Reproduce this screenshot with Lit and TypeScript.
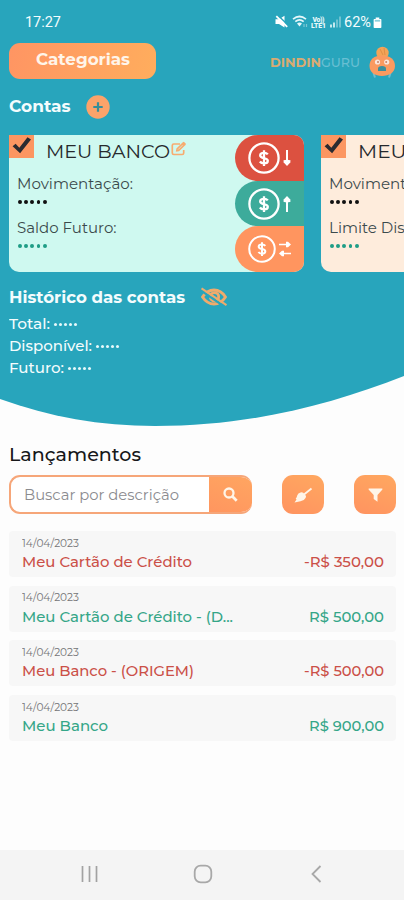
import { LitElement, html, css, svg } from "lit";
import { customElement, property } from "lit/decorators.js";
import { classMap } from "lit/directives/class-map.js";

/** Single-line label whose glyphs are stretched horizontally to a set width. */
@customElement("fit-text")
class FitText extends LitElement {
  @property() text = "";
  @property({ type: Number }) width = 0;

  static styles = css`
    :host { display: block; white-space: nowrap; flex: none; }
    .inner { display: inline-block; transform-origin: 0 50%; vertical-align: top; white-space: pre; }
  `;

  render() {
    return html`<span class="inner">${this.text}</span>`;
  }

  updated() {
    const inner = this.renderRoot.querySelector(".inner") as HTMLElement;
    inner.style.transform = "none";
    const natural = inner.getBoundingClientRect().width;
    this.style.width = `${this.width}px`;
    if (natural > 0) inner.style.transform = `scaleX(${this.width / natural})`;
  }
}

const t = (text: string, width: number) => html`<fit-text .text=${text} .width=${width}></fit-text>`;

const coin = svg`
  <circle cx="16" cy="16" r="14.6" fill="none" stroke="#fff" stroke-width="2.3"/>
  <path d="M19.8 12.4C19 11.3 17.600 10.800 16 10.800c-2.200 0-3.800 1-3.800 2.600 0 3.600 7.600 1.700 7.600 5.300 0 1.700-1.700 2.700-3.800 2.700-1.800 0-3.300-.7-4.100-1.900M16 8.200v15.800" fill="none" stroke="#fff" stroke-width="2.300"/>`;

const arrowDown = svg`<path d="M4 0v12" stroke="#fff" stroke-width="2" fill="none"/><path d="M.5 10.300Q4 9.300 7.500 10.300L7.300 12.500 4 16 .7 12.500z" fill="#fff"/>`;
const arrowUp = svg`<path d="M4 4v12" stroke="#fff" stroke-width="2" fill="none"/><path d="M.5 5.700Q4 6.700 7.500 5.700L7.300 3.500 4 0 .7 3.500z" fill="#fff"/>`;

@customElement("account-card")
class AccountCard extends LitElement {
  @property() name = "";
  @property({ type: Number }) nameWidth = 0;
  @property() second = "";
  @property({ type: Number }) secondWidth = 0;
  @property({ type: Boolean }) actions = false;

  static styles = css`
    :host { display: flex; flex: none; width: 295px; height: 137px; border-radius: 0 10px 10px 10px; overflow: hidden; color: #3b4a4c; }
    svg { display: block; flex: none; }
    .info { flex: 1; min-width: 0; }
    .top { display: flex; height: 32px; }
    .check { width: 25px; height: 23px; background: #fc9661; }
    .name { margin: 6.500px 0 0 12px; font-size: 19px; line-height: 20px; color: #26292c; }
    .edit { margin: 6px 0 0 1px; }
    .rows { padding: 5.500px 0 0 8px; font-size: 14.800px; line-height: 22px; }
    .dots { display: flex; gap: 2.300px; height: 15px; margin-bottom: 7px; padding-left: 1px; align-items: center; }
    .dots i { width: 3.900px; height: 3.900px; border-radius: 50%; background: #111; }
    .dots.green i { background: #1f9d86; }
    .actions { width: 69px; display: flex; flex-direction: column; }
    .act { flex: 1; display: flex; align-items: center; border-radius: 23px 0 0 23px; padding-left: 13px; gap: 3px; }
    .red { background: #dc5140; }
    .teal { background: #3dab9b; }
    .orange { background: #ff955f; }
  `;

  private dots(green = false) {
    return html`<div class=${classMap({ dots: true, green })}>${[0, 1, 2, 3, 4].map(() => html`<i></i>`)}</div>`;
  }

  render() {
    return html`
      <div class="info">
        <div class="top">
          <div class="check">
            <svg width="25" height="23" viewBox="0 0 25 23"><path d="M3.600 11.300l3-2.500 3.700 4L18.500 2.200l3.500 2.200L11.100 18.200z" fill="#2b2b30"/></svg>
          </div>
          <div class="name">${t(this.name, this.nameWidth)}</div>
          ${this.actions ? html`<svg class="edit" width="16" height="16" viewBox="0 0 16 16">
            <path d="M9 3H2.800Q1.300 3 1.300 4.500V12q0 1.500 1.500 1.500h8.400q1.500 0 1.500-1.500V9" fill="none" stroke="#f7ac70" stroke-width="1.700"/>
            <path d="M4.800 10.800l.6-3.300 6.400-6.300q.8-.8 1.600 0l1.100 1.100q.8.8 0 1.600L8 10.200z" fill="#f7ac70"/><path d="M7.200 8.500l4.300-4.300" stroke="#cff9f0" stroke-width=".7"/></svg>` : ""}
        </div>
        <div class="rows">
          ${t("Movimentação:", 116)}
          ${this.dots()}
          ${t(this.second, this.secondWidth)}
          ${this.dots(true)}
        </div>
      </div>
      ${this.actions ? html`<div class="actions">
        <div class="act red"><svg width="32" height="32" viewBox="0 0 32 32">${coin}</svg><svg width="8" height="16" viewBox="0 0 8 16">${arrowDown}</svg></div>
        <div class="act teal"><svg width="32" height="32" viewBox="0 0 32 32">${coin}</svg><svg width="8" height="16" viewBox="0 0 8 16">${arrowUp}</svg></div>
        <div class="act orange"><svg width="28" height="28" viewBox="0 0 32 32">${coin}</svg>
          <svg width="12" height="16" viewBox="0 0 12 16"><path d="M0 3.500h8M4 12.500h8" stroke="#fff" stroke-width="1.700"/><path d="M7 .8h2L12 3.500 9 6.200H7zM5 9.800H3L0 12.500l3 2.700h2z" fill="#fff"/></svg></div>
      </div>` : ""}`;
  }
}

interface Entry { title: string; titleWidth: number; amount: string; amountWidth: number; out: boolean; }

const ENTRIES: Entry[] = [
  { title: "Meu Cartão de Crédito", titleWidth: 170, amount: "-R$ 350,00", amountWidth: 80, out: true },
  { title: "Meu Cartão de Crédito - (D...", titleWidth: 211, amount: "R$ 500,00", amountWidth: 75, out: false },
  { title: "Meu Banco - (ORIGEM)", titleWidth: 172, amount: "-R$ 500,00", amountWidth: 80, out: true },
  { title: "Meu Banco", titleWidth: 86, amount: "R$ 900,00", amountWidth: 75, out: false },
];

@customElement("app-root")
class AppRoot extends LitElement {
  static styles = css`
    :host { display: flex; flex-direction: column; width: 404px; height: 900px; overflow: hidden; background: #fdfdfd; font-family: Montserrat, Inter, "Open Sans", sans-serif; }
    * { box-sizing: border-box; }
    svg { display: block; flex: none; }
    .hero { height: 427px; flex: none; background: #28a5bc; color: #f4fcfd; clip-path: path("M0 0H404V376C330 405 250 426 155 426C100 426 50 417 0 399Z"); }
    .status { height: 43px; display: flex; align-items: center; justify-content: space-between; padding: 0 22px 0 25px; font-family: Roboto, sans-serif; font-size: 15px; }
    .sys { display: flex; align-items: center; }
    .sys svg { margin-right: 3.500px; }
    .sys .batt { margin: 2px 0 0 2px; }
    .bar { height: 36px; display: flex; align-items: center; justify-content: space-between; padding: 0 7px 0 9px; }
    .cat { width: 147px; height: 36px; border-radius: 11px; background: linear-gradient(100deg, #ff9563, #ffad5d); display: flex; justify-content: center; padding-top: 5px; font-weight: 700; font-size: 17px; line-height: 22px; color: #fff5ea; }
    .brand { display: flex; align-items: center; font-size: 13.200px; line-height: 18px; padding-top: 1px; }
    .din { color: #d9ab72; font-weight: 700; }
    .guru { color: #69bfd3; font-weight: 500; }
    .brand svg { margin-left: 7px; }
    .accounts { height: 56px; display: flex; align-items: center; padding-left: 8.500px; gap: 16px; font-weight: 700; font-size: 17px; line-height: 22px; padding-bottom: 3px; }
    .plus { margin-top: 3px; }
    .cards { display: flex; gap: 17px; padding-left: 9px; height: 137px; overflow: hidden; }
    .mint { background: #cff9f0; }
    .cream { background: #feecdc; }
    .hist { display: flex; align-items: center; gap: 15px; height: 24px; margin-top: 13px; padding-left: 8.500px; font-weight: 700; font-size: 16.800px; line-height: 22px; }
    .sum { display: flex; align-items: center; gap: 4px; height: 22px; padding-left: 8.500px; font-weight: 500; font-size: 14.800px; line-height: 22px; }
    .sums { padding-top: 4px; }
    .dots { display: flex; gap: 2px; }
    .dots i { width: 3px; height: 3px; border-radius: 50%; background: #e6f8fa; }
    .list { flex: 1; padding: 16px 8px 0 9px; }
    .title { font-size: 19px; line-height: 24px; color: #17181a; font-weight: 500; }
    .tools { display: flex; align-items: center; margin-top: 8px; height: 39px; }
    .search { display: flex; width: 243px; height: 39px; border-radius: 11px; border: 2px solid #f6a679; border-right-width: 0; overflow: hidden; background: #fff; color: #8b8b8f; font-size: 15.200px; line-height: 36px; justify-content: space-between; padding-left: 13px; }
    .go { width: 43px; height: 39px; margin-top: -2px; background: linear-gradient(20deg, #ff955f, #ffa661); display: flex; align-items: center; justify-content: center; }
    .btn { width: 42px; height: 39px; border-radius: 11px; background: linear-gradient(20deg, #ff9360, #ffa860); display: flex; align-items: center; justify-content: center; }
    .brush { margin-left: 30px; }
    .filter { margin-left: 30px; }
    .rows { display: flex; flex-direction: column; gap: 8.700px; margin-top: 17px; }
    .row { height: 46px; background: #f7f7f7; border-radius: 4px; padding: 4.500px 12px 0 12.500px; }
    .date { font-size: 10.800px; line-height: 15px; color: #747476; }
    .line { display: flex; justify-content: space-between; font-size: 15px; line-height: 22px; font-weight: 500; color: #35a688; margin-top: .5px; }
    .out { color: #cb5048; }
    .nav { flex: none; height: 50px; background: #f4f4f4; display: flex; align-items: center; justify-content: center; gap: 91px; padding: 0 0 2px 2px; }
    .nav svg { width: 22px; height: 22px; }
  `;

  private sum(label: string, width: number) {
    return html`<div class="sum">${t(label, width)}<div class="dots">${[0, 1, 2, 3, 4].map(() => html`<i></i>`)}</div></div>`;
  }

  render() {
    return html`
      <div class="hero">
        <div class="status">
          ${t("17:27", 36)}
          <div class="sys">
            <svg width="13" height="13" viewBox="0 0 13 13"><path d="M.5 4.300h3.500L9.500 .8v11.700L4 9H.5z" fill="#fff"/><path d="M2.500 0L13 10" stroke="#28a5bc" stroke-width="1.500"/><path d="M1.300 1.200L12.200 11.800" stroke="#fff" stroke-width="1.800"/></svg>
            <svg width="16" height="13" viewBox="0 0 16 13"><path d="M1 4.200Q7.500-1.200 14 4.200M3.300 6.700Q7.500 3.200 11.700 6.700" fill="none" stroke="#e4f7fa" stroke-width="1.700"/><path d="M5 8.500Q7.500 6.500 10 8.500L7.500 11.500z" fill="#e4f7fa"/><path d="M12 9v3M14.500 9v3" stroke="#7cc8d6" stroke-width="1.200"/></svg>
            <svg width="15" height="14" viewBox="0 0 15 14"><text x="1.500" y="6.500" font-family="Roboto" font-weight="900" font-size="6.800" fill="#e9f9fb" textLength="12">Vo))</text><text x="0" y="12.800" font-family="Roboto" font-weight="900" font-size="6.800" fill="#e9f9fb" textLength="15">LTE1</text></svg>
            <svg width="11" height="12" viewBox="0 0 11 12"><path d="M1 8.500v3M4 6.500v5" stroke="#dff5f8" stroke-width="1.700"/><path d="M7 3.500v8M10 .5v11" stroke="#7cc8d6" stroke-width="1.700"/></svg>
            ${t("62%", 27)}
            <svg class="batt" width="9" height="12" viewBox="0 0 10 12"><path d="M3 0h4v1.500h1.500q.8 0 .8.800v8.400q0 .8-.8.800h-7q-.8 0-.8-.8V2.300q0-.8.800-.8H3z" fill="#fff"/><path d="M2 2.500h6v2H2z" fill="#8fd0dc"/></svg>
          </div>
        </div>
        <div class="bar">
          <div class="cat">${t("Categorias", 94)}</div>
          <div class="brand">
            <span class="din">${t("DINDIN", 51)}</span><span class="guru">${t("GURU", 39)}</span>
            <svg width="30" height="34" viewBox="0 0 30 34">
              <path d="M6.500 28l1.500 4.500M23.500 28l-1.500 4.500" stroke="#72bccb" stroke-width="2"/>
              <circle cx="15.500" cy="8" r="6.200" fill="#f4a457"/>
              <path d="M13 4l3 6M17 3l1 7" stroke="#e08f48" stroke-width="1"/>
              <path d="M15 10.500C23 10.500 28 14.500 28 21S22 31 15 31 2.500 27.500 2.500 21 7 10.500 15 10.500z" fill="#fb9a60"/>
              <circle cx="10.500" cy="17" r="2.600" fill="#fbe6dc"/><circle cx="19.700" cy="17" r="2.600" fill="#fbe6dc"/>
              <circle cx="11" cy="17" r="1" fill="#c98267"/><circle cx="19.200" cy="17" r="1" fill="#c98267"/>
              <path d="M11 26v-2.500q0-2.500 4-2.500t4 2.500V26z" fill="#3b8f9c"/>
            </svg>
          </div>
        </div>
        <div class="accounts">
          ${t("Contas", 61.5)}
          <svg class="plus" width="24" height="24" viewBox="0 0 24 24"><circle cx="12" cy="12" r="11.700" fill="#fba36a"/><path d="M12 7.300v9.400M7.300 12h9.400" stroke="#348e99" stroke-width="2.200"/></svg>
        </div>
        <div class="cards">
          <account-card class="mint" .name=${"MEU BANCO"} .nameWidth=${124} .second=${"Saldo Futuro:"} .secondWidth=${99.5} .actions=${true}></account-card>
          <account-card class="cream" .name=${"MEU CARTÃO"} .nameWidth=${138} .second=${"Limite Disponível:"} .secondWidth=${134}></account-card>
        </div>
        <div class="hist">
          ${t("Histórico das contas", 176)}
          <svg width="28" height="20" viewBox="0 0 28 20">
            <path d="M2.500 10Q7 3 14 3T25.500 10Q21 17 14 17T2.500 10z" fill="none" stroke="#efab6c" stroke-width="2.800"/>
            <circle cx="14.500" cy="9.800" r="4.200" fill="none" stroke="#efab6c" stroke-width="2.800"/>
            <path d="M1 3.500L25 20" stroke="#28a5bc" stroke-width="2.200"/>
            <path d="M1.500 1.300L26.500 18.200" stroke="#efab6c" stroke-width="2"/>
          </svg>
        </div>
        <div class="sums">
          ${this.sum("Total:", 41)}${this.sum("Disponível:", 83)}${this.sum("Futuro:", 55)}
        </div>
      </div>
      <div class="list">
        <div class="title">${t("Lançamentos", 132)}</div>
        <div class="tools">
          <div class="search">
            ${t("Buscar por descrição", 155)}
            <div class="go"><svg width="15" height="15" viewBox="0 0 15 15"><circle cx="6" cy="6" r="4.500" fill="none" stroke="#fff5e8" stroke-width="2.300"/><path d="M9 9l4.700 4.700" stroke="#fff5e8" stroke-width="2.700"/></svg></div>
          </div>
          <div class="btn brush"><svg width="20" height="18" viewBox="0 0 20 18"><path d="M18.500 2.500L11 8.500" stroke="#fff5e8" stroke-width="1.900"/><path d="M7.500 6.500q1.500-.8 2.700.3L12.700 9.500q.8 1.200-.2 2.500Q11 15 7.500 15.300L1.500 16.500 3.500 13.500l-.8-1Q4 11.500 4.200 9.500 5 7 7.500 6.500z" fill="#fff5e8"/></svg></div>
          <div class="btn filter"><svg width="15" height="14" viewBox="0 0 15 14"><path d="M.8 .5h13.400q.6.6 0 1.200L9.500 7v6.800L5.700 11V7L.8 1.700Q.2 1 .8 .5z" fill="#fff5e8"/></svg></div>
        </div>
        <div class="rows">
          ${ENTRIES.map((e) => html`<div class="row">
            <div class="date">${t("14/04/2023", 57)}</div>
            <div class=${classMap({ line: true, out: e.out })}>${t(e.title, e.titleWidth)}${t(e.amount, e.amountWidth)}</div>
          </div>`)}
        </div>
      </div>
      <div class="nav">
        <svg viewBox="0 0 22 22"><path d="M3.500 3v16M10.500 3v16M17.500 3v16" stroke="#a2a2a2" stroke-width="1.700"/></svg>
        <svg viewBox="0 0 22 22"><rect x="2.700" y="2.700" width="16.600" height="16.600" rx="6" fill="none" stroke="#a8a8a8" stroke-width="1.800"/></svg>
        <svg viewBox="0 0 22 22"><path d="M15.500 3L7.500 11l8 8" fill="none" stroke="#a8a8a8" stroke-width="1.800"/></svg>
      </div>`;
  }
}
